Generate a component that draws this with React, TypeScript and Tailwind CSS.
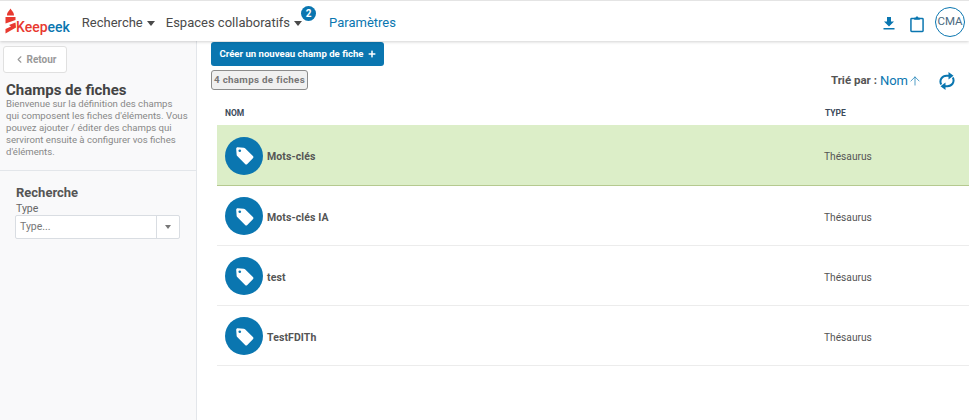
import React from 'react';
import { ChevronLeft, ArrowUp } from 'lucide-react';
import { FaPlus } from 'react-icons/fa';

const font = "font-['Roboto',sans-serif]";

const fields = [
  { name: 'Mots-clés', type: 'Thésaurus', active: true },
  { name: 'Mots-clés IA', type: 'Thésaurus', active: false },
  { name: 'test', type: 'Thésaurus', active: false },
  { name: 'TestFDITh', type: 'Thésaurus', active: false },
];

const Caret = () => <span className="ml-[4px] inline-block border-x-[4.5px] border-t-[5px] border-x-transparent border-t-[#4a4a4a]" />;

const Logo = () => (
  <div className="-mt-[2px] flex items-end">
    <svg width="11" height="26" viewBox="0 0 11 26">
      <path d="M2 7.5 C2 4 4 3 5.5 0.5 C7 3 9 4 9 7.5 Z" fill="#e8392f" />
      <path d="M0.5 9 L10.5 9 L10.5 12 L0.5 15.5 Z" fill="#e8392f" />
      <path d="M4 17 L10.5 14.5 L11 19.5 L0.5 25.5 L0.5 21 L6 18.5 Z" fill="#e8392f" />
    </svg>
    <span className="-mb-[2px] text-[14px] leading-[18px] font-medium">
      <span className="text-[#e8392f]">Keep</span>
      <span className="text-[#0a76b0]">eek</span>
    </span>
  </div>
);

const TagIcon = () => (
  <svg width="21" height="21" viewBox="0 0 24 24">
    <path
      d="M2.5 4.2 C2.5 3.2 3.2 2.5 4.2 2.5 L11.2 3 C11.8 3 12.2 3.3 12.6 3.7 L21.6 12.7 C22.4 13.5 22.4 14.4 21.6 15.2 L15.2 21.6 C14.4 22.4 13.5 22.4 12.7 21.6 L3.7 12.6 C3.3 12.2 3 11.8 3 11.2 Z"
      fill="#ffffff"
    />
    <circle cx="6.6" cy="6.6" r="1.5" fill="#0a76b0" />
  </svg>
);

const SyncIcon = () => (
  <svg width="16" height="18" viewBox="0 0 16 18" fill="none" className="ml-[17px]">
    <path d="M2.2 12.5 C0 8 3 3.6 8 3.8 L10 3.8" stroke="#0a76b0" strokeWidth="2" />
    <path d="M9.5 0 L14.5 3.8 L9.5 7.6 Z" fill="#0a76b0" />
    <path d="M13.8 5.5 C16 10 13 14.4 8 14.2 L6 14.2" stroke="#0a76b0" strokeWidth="2" />
    <path d="M6.5 10.4 L1.5 14.2 L6.5 18 Z" fill="#0a76b0" />
  </svg>
);

const Row = ({ name, type, active }: { name: string; type: string; active: boolean }) => (
  <div className={`flex items-center border-b pl-2 pt-[2px] ${active ? 'h-[61px] bg-[#dceec8] border-[#b5c98f]' : 'h-[60px] border-[#ececec]'}`}>
    <div className="flex h-[38px] w-[38px] shrink-0 items-center justify-center rounded-full bg-[#0a76b0]">
      <TagIcon />
    </div>
    <span className="ml-[4px] w-[557px] pt-[3px] text-[10.5px] font-bold tracking-[0.1px] text-[#555]">{name}</span>
    <span className="pt-[3px] text-[10.2px] text-[#555]">{type}</span>
  </div>
);

export default function App() {
  return (
    <div className={`flex h-[420px] w-[969px] flex-col overflow-hidden bg-white ${font}`}>
      {/* top bar */}
      <header className="relative z-10 flex h-[41px] shrink-0 items-center border-t border-[#e4e4e4] pl-[5px] pr-[4px] pt-[2px] shadow-[0_1px_3px_rgba(0,0,0,0.18)]">
        <Logo />
        <nav className="ml-[12px] flex items-center pt-[2px] text-[13px] text-[#4a4a4a]">
          <span className="flex items-center">Recherche<Caret /></span>
          <span className="relative ml-[11px] flex items-center">
            Espaces collaboratifs<Caret />
            <span className="absolute right-[-14px] top-[-7px] flex h-[15px] w-[15px] items-center justify-center rounded-full bg-[#0a76b0] text-[10px] font-bold text-white">2</span>
          </span>
          <span className="ml-[27px] text-[#0a76b0]">Paramètres</span>
        </nav>
        <div className="ml-auto flex items-center">
          <svg width="12" height="13" viewBox="0 0 12 13" className="mt-[3px]">
            <path d="M4 0 H8 V4.5 H11 L6 9.5 L1 4.5 H4 Z" fill="#0a76b0" />
            <rect x="0.5" y="11" width="11" height="1.5" fill="#0a76b0" />
          </svg>
          <svg width="14" height="18" viewBox="0 0 15 18" className="ml-[15px] mt-[3px]" fill="none">
            <rect x="1" y="3" width="13" height="14" rx="0.8" stroke="#0a76b0" strokeWidth="1.6" />
            <path d="M4.5 4.5 V2.2 H6 C6 0.6 9 0.6 9 2.2 H10.5 V4.5 Z" fill="#0a76b0" />
          </svg>
          <div className="ml-[11px] flex h-[30px] w-[30px] items-center justify-center rounded-full border border-[#0a76b0] text-[11.5px] text-[#4a6a80]">CMA</div>
        </div>
      </header>

      <div className="flex min-h-0 flex-1">
        {/* sidebar */}
        <aside className="w-[197px] shrink-0 border-r border-[#e3e6ea] bg-[#f9f9fa]">
          <div className="border-b border-[#e3e6ea] pb-[12px] pl-[6px] pr-[2px] pt-[5px]">
            <button className="-ml-[3px] flex h-[27px] w-[64px] items-center justify-center rounded-[3px] border border-[#e0e0e0] bg-white text-[10px] font-bold text-[#999]">
              <ChevronLeft size={11} className="mr-[2px]" strokeWidth={2.5} />Retour
            </button>
            <h1 className="mt-[9px] text-[15px] font-bold leading-[16px] text-[#444]">Champs de fiches</h1>
            <p className="whitespace-nowrap text-[9.6px] leading-[12px] text-[#888]">
              Bienvenue sur la définition des champs<br />
              qui composent les fiches d'éléments. Vous<br />
              pouvez ajouter / éditer des champs qui<br />
              serviront ensuite à configurer vos fiches<br />
              d'éléments.
            </p>
          </div>
          <div className="pl-[16px] pt-[14px]">
            <h2 className="text-[13px] font-bold leading-[16px] text-[#555]">Recherche</h2>
            <div className="mt-[1px] text-[10.5px] leading-[13px] text-[#666]">Type</div>
            <div className="flex h-[24px] w-[165px] -translate-x-px items-center rounded-[2px] border border-[#d9dde2] bg-white">
              <span className="flex-1 pl-[4px] text-[10.5px] text-[#777]">Type...</span>
              <span className="flex h-full w-[23px] items-center justify-center border-l border-[#d9dde2]">
                <span className="inline-block border-x-[3.5px] border-t-[4px] border-x-transparent border-t-[#777]" />
              </span>
            </div>
          </div>
        </aside>

        {/* main content */}
        <main className="min-w-0 flex-1 pl-[14px]">
          <button className="mt-[1px] flex h-[24px] w-[173px] items-center justify-center rounded-[3px] bg-[#0a76b0] text-[9.6px] font-bold text-white">
            Créer un nouveau champ de fiche
            <FaPlus size={8} className="ml-[4px]" />
          </button>
          <div className="mt-[4px] flex h-[20px] w-[97px] items-center justify-center rounded-[3px] border border-[#8c8c8c] bg-[#f0f0f0] text-[9.8px] font-bold tracking-[0.3px] text-[#777]">
            4 champs de fiches
          </div>
          <div className="-mt-[19px] flex items-center justify-end pr-[14px]">
            <span className="text-[11.5px] font-bold text-[#555]">Trié par :</span>
            <span className="ml-[3px] text-[13px] text-[#0a76b0]">Nom</span>
            <ArrowUp size={14} strokeWidth={1.2} className="text-[#0a76b0]" />
            <SyncIcon />
          </div>
          <div className="ml-[6px]">
            <div className="mt-[14px] flex h-[17px] items-center pl-[8px] text-[8.5px] font-bold text-[#3c4a5a]">
              <span className="w-[600px]">NOM</span>
              <span>TYPE</span>
            </div>
            <div className="mt-[3px]">
              {fields.map((f) => (
                <Row key={f.name} {...f} />
              ))}
            </div>
          </div>
        </main>
      </div>
    </div>
  );
}
